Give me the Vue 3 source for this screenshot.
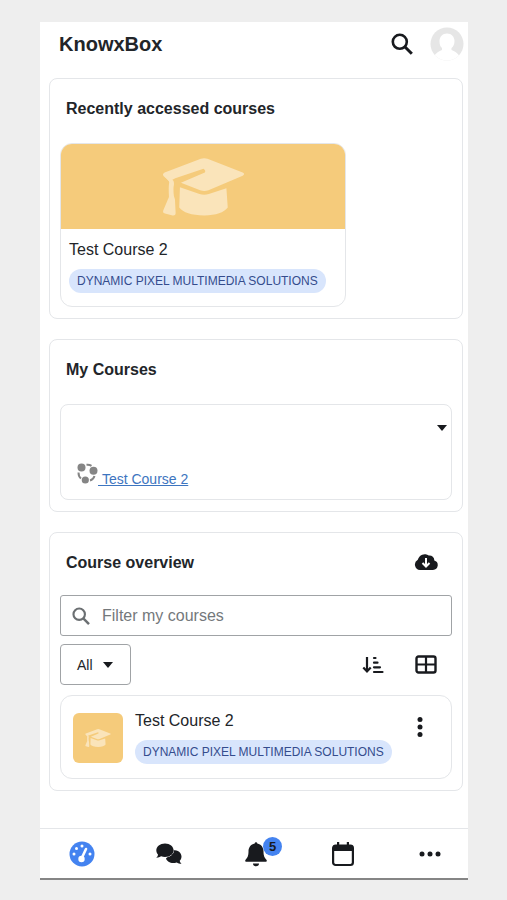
<script setup>
import { ref } from 'vue'

const query = ref('')
const category = 'DYNAMIC PIXEL MULTIMEDIA SOLUTIONS'
const course = 'Test Course 2'
</script>

<template>
  <div class="page">
    <svg class="defs" aria-hidden="true">
      <symbol id="cap" viewBox="335 80 250 180">
        <path d="M356 151 L341 138 Q334 131 343 126 L452 85 Q462 82 472 85 L578 126 Q587 131 578 136 L475 180 Q462 184 450 180 L392 157 L464 126 Q468 120 460 115 L375 144 Q362 149 356 157Z" />
        <path d="M342 137 L366 148 Q372 151 371 163 Q368 174 371 198 L374 207 L376 247 Q377 257 367 256 L344 250 Q336 248 339 240 L353 207 L356 200 Q354 170 357 154Z" />
        <path d="M389 171 L448 191 Q462 195 476 191 L529 174 L533 232 Q516 255 462 256 Q404 255 387 232Z" />
      </symbol>
      <symbol id="magnifier" viewBox="0 0 22 22">
        <circle cx="8.8" cy="8.8" r="7" fill="none" stroke="currentColor" stroke-width="2.6" />
        <path d="M13.8 13.8L20.8 20.8" stroke="currentColor" stroke-width="3" />
      </symbol>
    </svg>

    <div class="phone">
      <header class="topbar">
        <h1>KnowxBox</h1>
        <button class="icon-button" aria-label="Search">
          <svg class="search-icon"><use href="#magnifier" /></svg>
        </button>
        <button class="icon-button" aria-label="Account">
          <svg class="avatar" viewBox="0 0 34 34">
            <defs><clipPath id="round"><circle cx="17" cy="17" r="16.5" /></clipPath></defs>
            <g clip-path="url(#round)">
              <rect width="34" height="34" fill="#e6e6e6" />
              <path d="M17 6.500c4.500 0 7.500 3.500 7.500 7.500 0 3-1 5.500-3 7v2c3 1 6 3 8 6v6H4v-6c2-3 5-5 8-6v-2c-2-1.500-2.500-4-2.500-7 0-4 3-7.500 7.500-7.500z" fill="#fff" />
            </g>
          </svg>
        </button>
      </header>

      <main>
        <section class="card">
          <h2>Recently accessed courses</h2>
          <article class="course-tile">
            <div class="banner"><svg class="banner-cap"><use href="#cap" /></svg></div>
            <div class="tile-text">
              <h3>{{ course }}</h3>
              <span class="pill">{{ category }}</span>
            </div>
          </article>
        </section>

        <section class="card">
          <h2>My Courses</h2>
          <div class="course-list">
            <button class="icon-button toggle" aria-label="Expand list"><span class="caret"></span></button>
            <a class="course-link" href="#course">
              <svg class="course-icon" viewBox="0 0 21 21">
                <circle cx="4.500" cy="4.500" r="4" fill="#858585" />
                <circle cx="16.500" cy="7.800" r="4" fill="#858585" />
                <circle cx="8.300" cy="17" r="3.600" fill="#858585" />
                <path d="M9.500 1.800Q12.500 1.500 14.500 2.800M1.500 9.500Q1.500 13.500 4 15.500M13 17.500Q16.500 16.500 17.500 13" fill="none" stroke="#858585" stroke-width="2" />
              </svg><span class="link-text">&nbsp;{{ course }}</span>
            </a>
          </div>
        </section>

        <section class="card">
          <div class="heading-row">
            <h2>Course overview</h2>
            <button class="icon-button" aria-label="Download courses">
              <svg class="cloud" viewBox="0 0 24 18">
                <path d="M6 17A5.500 5.500 0 0 1 3.800 6.700 7.200 7.200 0 0 1 14.800 2.500 4.800 4.800 0 0 1 20.300 7.600 4.800 4.800 0 0 1 19 17Z" fill="#181a1e" />
                <path d="M12 5v8.500M8.500 10L12 13.500l3.500-3.500" fill="none" stroke="#fff" stroke-width="2" />
              </svg>
            </button>
          </div>
          <label class="filter">
            <svg class="filter-icon"><use href="#magnifier" /></svg>
            <input v-model="query" type="text" placeholder="Filter my courses" aria-label="Filter my courses" />
          </label>
          <div class="tools">
            <button class="all-button">All <span class="caret"></span></button>
            <button class="icon-button sort" aria-label="Sort">
              <svg viewBox="0 0 22 18" class="sort-icon">
                <path d="M5 1v14M1.300 11.500L5 15.500l3.700-4" fill="none" stroke="#181a1e" stroke-width="2.200" />
                <path d="M12 2h1.500M12 6.700h3.500M12 11.300h6M12 16H20.500" stroke="#181a1e" stroke-width="2.200" stroke-linecap="round" />
              </svg>
            </button>
            <button class="icon-button" aria-label="Grid view">
              <svg viewBox="0 0 22 19" class="grid-icon">
                <rect x="1.500" y="1.500" width="19" height="16" rx="2" fill="none" stroke="#181a1e" stroke-width="2.400" />
                <path d="M11 1v17M1 9.500h20" stroke="#181a1e" stroke-width="2.200" />
              </svg>
            </button>
          </div>
          <article class="course-row">
            <div class="thumb"><svg class="thumb-cap"><use href="#cap" /></svg></div>
            <div class="row-text">
              <h3>{{ course }}</h3>
              <span class="pill">{{ category }}</span>
            </div>
            <button class="icon-button more" aria-label="Course actions">
              <svg viewBox="0 0 6 20" class="kebab"><circle cx="3" cy="2.500" r="2.500" /><circle cx="3" cy="10" r="2.500" /><circle cx="3" cy="17.500" r="2.500" /></svg>
            </button>
          </article>
        </section>
      </main>

      <nav class="tabs">
        <a href="#dashboard" aria-label="Dashboard">
          <svg viewBox="0 0 26 26" class="tab-icon">
            <circle cx="13" cy="13" r="12.500" fill="#4483f0" />
            <g fill="#fff">
              <circle cx="5" cy="13" r="1.500" /><circle cx="7.500" cy="7.500" r="1.500" /><circle cx="13" cy="5" r="1.500" /><circle cx="21" cy="13" r="1.500" />
              <circle cx="12.500" cy="18" r="3.200" />
            </g>
            <path d="M12.800 17L17 8" stroke="#fff" stroke-width="2.600" stroke-linecap="round" />
          </svg>
        </a>
        <a href="#messages" aria-label="Messages">
          <svg viewBox="0 0 26 22" class="tab-icon">
            <path d="M17 7c5 0 8.500 2.800 8.500 6.500 0 1.800-.7 3.200-1.800 4.300.3 1.300 1 2.200 1.900 3-2 0-3.700-.5-5-1.300-5 1.500-9.600-.5-10.600-4" fill="#181a1e" />
            <path d="M9 0.500c5 0 8.600 3 8.600 6.800S14 14 9 14c-1.400 0-2.700-.2-3.900-.7C3.800 14.200 2 14.800.3 14.700c.9-.8 1.500-1.700 1.800-3C1 10.500.3 9 .3 7.300.3 3.500 4 .5 9 .5z" fill="#181a1e" stroke="#fff" stroke-width="1" paint-order="stroke" />
          </svg>
        </a>
        <a href="#notifications" aria-label="Notifications, 5 unread">
          <span class="bell-wrap">
            <svg viewBox="0 0 24 26" class="tab-icon">
              <path d="M10.700 2.500a1.300 1.300 0 0 1 2.600 0c4 .7 6.200 4 6.200 8 0 4.500 1.200 6.500 2.900 8.200.8.800.4 2.100-.9 2.100h-19c-1.300 0-1.700-1.300-.9-2.100 1.700-1.700 2.900-3.700 2.900-8.200 0-4 2.200-7.300 6.200-8zM9 22.500h6a3 2.800 0 0 1-6 0z" fill="#181a1e" />
            </svg>
            <span class="badge">5</span>
          </span>
        </a>
        <a href="#calendar" aria-label="Calendar">
          <svg viewBox="0 0 24 26" class="tab-icon">
            <rect x="2.100" y="4.500" width="19.800" height="19.500" rx="2.500" fill="none" stroke="#181a1e" stroke-width="2.200" />
            <path d="M2 10V6q0-2 2-2h16q2 0 2 2v4zM6 1h2.200v5H6zM15.800 1H18v5h-2.200z" fill="#181a1e" />
          </svg>
        </a>
        <a href="#more" aria-label="More">
          <svg viewBox="0 0 26 26" class="tab-icon"><circle cx="5" cy="13" r="2.500" /><circle cx="13" cy="13" r="2.500" /><circle cx="21" cy="13" r="2.500" /></svg>
        </a>
      </nav>
    </div>
  </div>
</template>

<style>
body {
  margin: 0;
  background: #eee;
}
</style>

<style scoped>
* {
  box-sizing: border-box;
}
.page {
  min-height: 100vh;
  padding: 22px 39px 20px 40px;
  display: flex;
  background: #eee;
  color: #222529;
  font-family: "Liberation Sans", Arial, sans-serif;
}
.defs {
  position: absolute;
  width: 0;
  height: 0;
}
.phone {
  flex: 1;
  min-width: 0;
  display: flex;
  flex-direction: column;
  background: #fff;
  border-bottom: 2px solid #858585;
}
svg {
  display: block;
}
h1, h2, h3 {
  margin: 0;
}
h1 {
  flex: 1;
  font-size: 20px;
  line-height: 24px;
}
h2 {
  padding: 0 6px;
  font-size: 16px;
  line-height: 20px;
}
h3 {
  font-size: 16px;
  font-weight: 400;
  line-height: 20px;
}
button {
  padding: 0;
  color: inherit;
  font: inherit;
}
.icon-button {
  border: 0;
  background: none;
}
.topbar {
  height: 56px;
  padding: 0 4px 12px 19px;
  display: flex;
  align-items: center;
  gap: 17px;
}
.search-icon {
  width: 22px;
  height: 22px;
  color: #181a1e;
}
.avatar {
  width: 34px;
  height: 34px;
}
main {
  flex: 1;
  padding: 0 5px 20px 9px;
  display: flex;
  flex-direction: column;
  gap: 20px;
}
.card {
  padding: 20px 10px 11px;
  border: 1px solid #e4e6e9;
  border-radius: 8px;
}
.course-tile {
  width: 73%;
  margin-top: 24px;
  border: 1px solid #e4e6e9;
  border-radius: 12px;
  overflow: hidden;
}
.banner {
  height: 85px;
  display: flex;
  justify-content: center;
  align-items: center;
  background: #f5cb7b;
}
.banner-cap {
  width: 83px;
  height: 60px;
  fill: #fae4ba;
}
.tile-text {
  padding: 11px 8px 13px;
}
.pill {
  width: fit-content;
  margin-top: 9px;
  padding: 0 8px;
  display: block;
  border-radius: 12px;
  background: #d8e5fc;
  color: #344c8d;
  font-size: 12px;
  line-height: 24px;
  white-space: nowrap;
}
.course-list {
  min-height: 96px;
  margin-top: 24px;
  padding: 20px 4px 11px 16px;
  display: flex;
  flex-direction: column;
  justify-content: space-between;
  border: 1px solid #e4e6e9;
  border-radius: 8px;
}
.toggle {
  align-self: flex-end;
}
.caret {
  display: block;
  border: 5px solid transparent;
  border-top: 6px solid #181a1e;
  border-bottom: 0;
}
.course-link {
  display: flex;
  align-items: flex-start;
  color: #3d75c0;
  font-size: 14px;
  line-height: 18px;
  text-decoration: none;
}
.link-text {
  padding-top: 7px;
  text-decoration: underline;
}
.course-icon {
  width: 21px;
  height: 21px;
}
.heading-row {
  padding-right: 14px;
  display: flex;
  align-items: flex-start;
  justify-content: space-between;
}
.cloud {
  width: 24px;
  height: 18px;
}
.filter {
  height: 41px;
  margin-top: 22px;
  padding: 0 11px;
  display: flex;
  align-items: center;
  gap: 12px;
  border: 1px solid #a0a3a6;
  border-radius: 3px;
}
.filter-icon {
  width: 18px;
  height: 18px;
  color: #6b6f72;
}
input {
  flex: 1;
  min-width: 0;
  padding: 0;
  border: 0;
  outline: 0;
  background: none;
  color: #222529;
  font: inherit;
}
input::placeholder {
  color: #74787b;
  opacity: 1;
}
.tools {
  margin-top: 8px;
  padding-right: 15px;
  display: flex;
  align-items: center;
  gap: 31px;
}
.all-button {
  height: 41px;
  padding: 0 17px 0 16px;
  display: flex;
  align-items: center;
  gap: 10px;
  border: 1px solid #a0a3a6;
  border-radius: 4px;
  background: #fff;
  font-size: 14px;
}
.sort {
  margin-left: auto;
}
.sort-icon {
  width: 22px;
  height: 18px;
}
.grid-icon {
  width: 22px;
  height: 19px;
}
.course-row {
  margin-top: 10px;
  padding: 15px 28px 14px 12px;
  display: flex;
  align-items: flex-start;
  gap: 12px;
  border: 1px solid #e4e6e9;
  border-radius: 12px;
}
.thumb {
  width: 50px;
  height: 50px;
  margin-top: 2px;
  display: flex;
  align-items: center;
  justify-content: center;
  border-radius: 6px;
  background: #f5cb7b;
}
.thumb-cap {
  width: 26px;
  height: 20px;
  fill: #fae4ba;
}
.row-text {
  flex: 1;
}
.more {
  margin-top: 6px;
}
.kebab {
  width: 6px;
  height: 20px;
  fill: #181a1e;
}
.tabs {
  height: 50px;
  padding: 0 25px 0 29px;
  display: flex;
  align-items: center;
  justify-content: space-between;
  border-top: 1px solid #e4e6e9;
}
.tabs a {
  color: #181a1e;
}
.tab-icon {
  width: 26px;
  height: 26px;
  fill: #181a1e;
}
.bell-wrap {
  position: relative;
  display: block;
}
.badge {
  position: absolute;
  top: -4px;
  left: 20px;
  width: 19px;
  height: 19px;
  border-radius: 50%;
  background: #4483f0;
  font-size: 13px;
  font-weight: 700;
  line-height: 19px;
  text-align: center;
}
</style>
